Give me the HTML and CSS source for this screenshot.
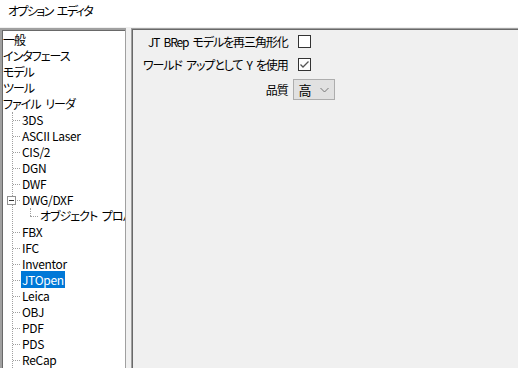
FILE: index.html
```html
<!DOCTYPE html>
<html lang="ja">
<head>
    <meta charset="UTF-8">
    <title>オプション エディタ</title>
    <link rel="stylesheet" href="styles.css">
</head>
<body>
    <div class="title">オプション エディタ</div>

    <div class="main">
        <div class="tree">
            <div class="node">一般</div>
            <div class="node">インタフェース</div>
            <div class="node">モデル</div>
            <div class="node">ツール</div>
            <div class="node">ファイル リーダ</div>
            <div class="children">
                <div class="leaf">3DS</div>
                <div class="leaf">ASCII Laser</div>
                <div class="leaf">CIS/2</div>
                <div class="leaf">DGN</div>
                <div class="leaf">DWF</div>
                <div class="leaf open">
                    <span class="toggle"></span>
                    DWG/DXF
                </div>
                <div class="subchildren">
                    <div class="leaf kana">オブジェクト プロパティ</div>
                </div>
                <div class="leaf">FBX</div>
                <div class="leaf">IFC</div>
                <div class="leaf">Inventor</div>
                <div class="leaf"><span class="selected">JTOpen</span></div>
                <div class="leaf">Leica</div>
                <div class="leaf">OBJ</div>
                <div class="leaf">PDF</div>
                <div class="leaf">PDS</div>
                <div class="leaf">ReCap</div>
                <div class="leaf">RVM</div>
            </div>
        </div>

        <div class="panel">
            <div class="form">
                <label class="label">JT BRep モデルを再三角形化</label>
                <span class="check"></span>

                <label class="label">ワールド アップとして Y を使用</label>
                <span class="check">
                    <svg width="11" height="11" viewBox="0 0 11 11"><path d="M1.5 5.5 L4 8 L9.5 2.5" fill="none" stroke="#555" stroke-width="1.3"/></svg>
                </span>

                <label class="label">品質</label>
                <span class="select">
                    高
                    <svg width="9" height="6" viewBox="0 0 9 6"><path d="M0.5 1 L4.5 5 L8.5 1" fill="none" stroke="#777" stroke-width="1"/></svg>
                </span>
            </div>
        </div>
    </div>
</body>
</html>
```

FILE: styles.css
```css
/* General */
body {
    margin: 0;
    width: 518px;
    height: 368px;
    overflow: hidden;
    background-color: #ffffff;
    font-family: "Noto Sans CJK JP", "Noto Sans", sans-serif;
    font-size: 12px;
    font-feature-settings: "palt";
    color: #000000;
}

.title {
    height: 27px;
    padding-left: 8px;
    line-height: 22px;
    letter-spacing: -1.6px;
    word-spacing: 3px;
    background-color: #ffffff;
}

.main {
    display: flex;
    gap: 5px;
    height: 341px;
    background-color: #f0f0f0;
    padding-top: 1px;
}

/* Tree */
.tree {
    width: 122px;
    background-color: #ffffff;
    border-top: 2px solid #a0a0a0;
    border-left: 2px solid #a0a0a0;
    border-right: 1px solid #a0a0a0;
    box-shadow: inset 1px 1px 0 #696969;
    padding: 2px 0 0 1px;
    overflow: hidden;
}

.node,
.leaf {
    height: 16px;
    line-height: 16px;
    white-space: nowrap;
}

.leaf {
    position: relative;
    padding-left: 9px;
    letter-spacing: -0.3px;
}

.node,
.kana {
    letter-spacing: -1px;
    word-spacing: 3px;
}

.children {
    margin-left: 9px;
    border-left: 1px dotted #a0a0a0;
}

.leaf::before {
    content: "";
    position: absolute;
    left: 0;
    top: 8px;
    width: 7px;
    border-top: 1px dotted #a0a0a0;
}

.subchildren {
    margin-left: 17px;
    height: 8px;
    border-left: 1px dotted #a0a0a0;
    margin-bottom: 8px;
}

.subchildren .leaf {
    padding-left: 10px;
    margin-left: -1px;
}

.subchildren .leaf::before {
    width: 8px;
}

.toggle {
    position: absolute;
    left: -6px;
    top: 4px;
    width: 7px;
    height: 7px;
    border: 1px solid #919191;
    background-color: #ffffff;
}

.toggle::after {
    content: "";
    position: absolute;
    left: 1px;
    top: 3px;
    width: 5px;
    border-top: 1px solid #333333;
}

.selected {
    background-color: #0078d7;
    color: #ffffff;
    padding: 0 1px;
    margin-left: -1px;
}

/* Options panel */
.panel {
    flex: 1;
    border-top: 1px solid #a0a0a0;
    border-left: 1px solid #a0a0a0;
    box-shadow: inset 1px 1px 0 #696969;
    padding: 4px 0 0 11px;
}

.form {
    display: grid;
    grid-template-columns: auto auto;
    justify-content: start;
    align-items: center;
    column-gap: 10px;
    row-gap: 6px;
}

.label {
    text-align: right;
    line-height: 17px;
    letter-spacing: -1.1px;
    word-spacing: 2.5px;
}

.check {
    width: 11px;
    height: 11px;
    border: 1px solid #333333;
    background-color: #ffffff;
    display: flex;
}

.select {
    display: flex;
    align-items: center;
    justify-content: space-between;
    width: 30px;
    height: 19px;
    padding: 0 5px;
    background-color: #e1e1e1;
    border: 1px solid #adadad;
    font-size: 13px;
    margin-left: -5px;
}
```
